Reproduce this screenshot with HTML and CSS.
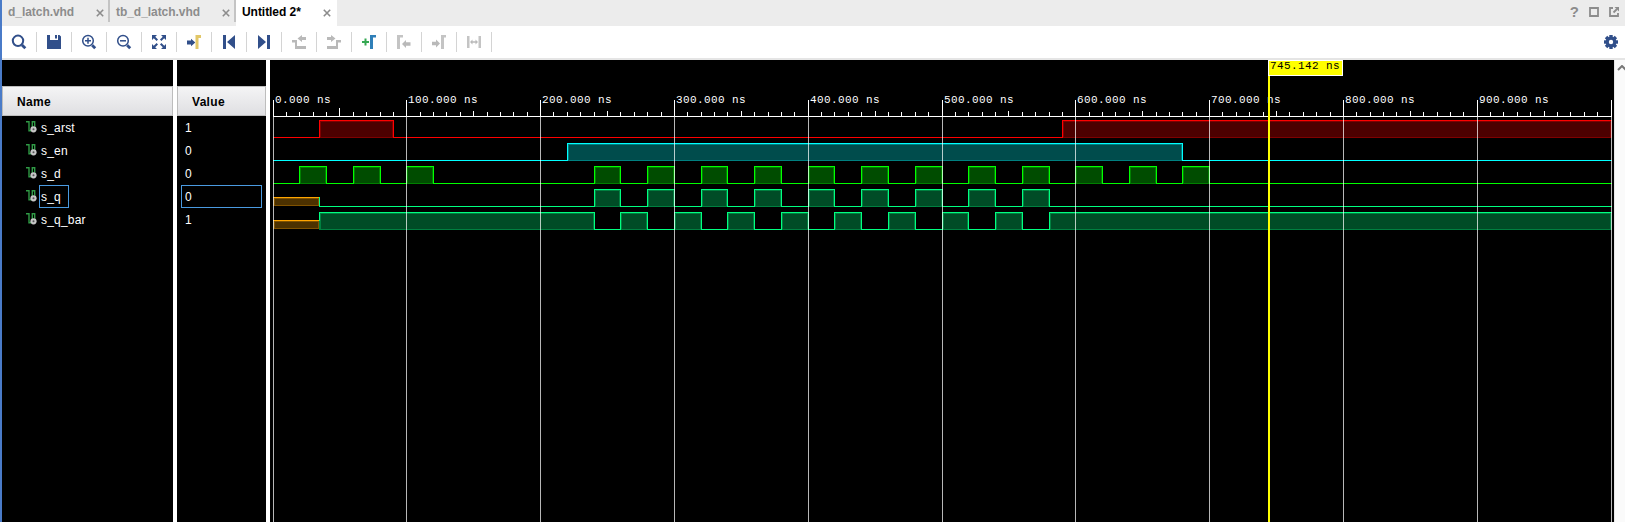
FILE: index.html
```html
<!DOCTYPE html>
<html lang="en">
<head>
<meta charset="utf-8">
<title>Waveform viewer</title>
<link rel="stylesheet" href="styles.css">
</head>
<body>
<div class="app">
  <div class="tabs">
    <div class="tab tab-first"><span>d_latch.vhd</span><svg class="close" viewBox="0 0 8 8"><path d="M.8.8l6.4 6.4M7.2.8L.8 7.2"/></svg></div>
    <div class="tab tab-second"><span>tb_d_latch.vhd</span><svg class="close" viewBox="0 0 8 8"><path d="M.8.8l6.4 6.4M7.2.8L.8 7.2"/></svg></div>
    <div class="tab tab-active"><span>Untitled 2*</span><svg class="close" viewBox="0 0 8 8"><path d="M.8.8l6.4 6.4M7.2.8L.8 7.2"/></svg></div>
    <div class="window-actions">
      <span class="help">?</span>
      <svg class="win" viewBox="0 0 10 10"><path d="M1 1h8v8H1z"/></svg>
      <svg class="win" viewBox="0 0 10 10"><path d="M4 1H1v8h8V6M4.500 5.500L8 2"/><path class="solid" d="M5.500 0H10v4.500z"/></svg>
    </div>
  </div>
  <div class="toolbar">
    <div class="tool"><svg viewBox="0 0 16 16"><circle class="line" cx="7" cy="6.800" r="5.200"/><path class="handle" d="M11 11l3.300 3.300"/></svg></div>
    <div class="tool"><svg viewBox="0 0 16 16"><path d="M1 1h3v5h8V1h1.500L15 2.500V15H1zM9 1h2v3.500H9z"/></svg></div>
    <div class="tool"><svg viewBox="0 0 16 16"><circle class="thin" cx="7" cy="6.800" r="5.300"/><path class="thin" d="M4 6.800h6M7 3.800v6"/><path class="handle" d="M11.200 11.200l3 3"/></svg></div>
    <div class="tool"><svg viewBox="0 0 16 16"><circle class="thin" cx="7" cy="6.800" r="5.300"/><path class="thin" d="M4 6.800h6"/><path class="handle" d="M11.200 11.200l3 3"/></svg></div>
    <div class="tool"><svg viewBox="0 0 16 16"><path d="M1 1h5L1 6zM15 1v5l-5-5zM1 15v-5l5 5zM15 15h-5l5-5z"/><path class="line" d="M3 3l3.300 3.300M13 3L9.700 6.300M3 13l3.300-3.300M13 13L9.700 9.700"/></svg></div>
    <div class="tool"><svg viewBox="0 0 16 16"><path d="M1 6.500h4V4.800L9.300 8.500 5 12.200V10.500H1z"/><path class="yellow" d="M9.500 15V1H15v3h-2.500v11z"/></svg></div>
    <div class="tool"><svg viewBox="0 0 16 16"><path d="M2 1h3v14H2zM14 1v14L6 8z"/></svg></div>
    <div class="tool"><svg viewBox="0 0 16 16"><path d="M11 1h3v14h-3zM2 1v14l8-7z"/></svg></div>
    <div class="tool off"><svg viewBox="0 0 16 16"><path d="M1 6h5v6h9v3H4V8.500H1zM6.500 4.500L11 1v2h4v3h-4v2z"/></svg></div>
    <div class="tool off"><svg viewBox="0 0 16 16"><path d="M15 6h-5v6H1v3h11V8.500h3zM9.500 4.500L5 1v2H1v3h4v2z"/></svg></div>
    <div class="tool"><svg viewBox="0 0 16 16"><path class="green" d="M1 7h2.500V4.500h2V7H8v2H5.500v2.500h-2V9H1z"/><path class="blue" d="M9 15V1h6v2.500h-3V15z"/></svg></div>
    <div class="tool off"><svg viewBox="0 0 16 16"><path class="pale" d="M1 15V1h6v2.500H4V15z"/><path d="M6 10l4-4v2.300h4.500v3.500H10V14z"/></svg></div>
    <div class="tool off"><svg viewBox="0 0 16 16"><path class="pale" d="M10 15V1h5v2.500h-2V15z"/><path d="M9 9.500l-4-4v2.300H1v3.500h4v2.200z"/></svg></div>
    <div class="tool off"><svg viewBox="0 0 16 16"><path class="pale" d="M1 2h2.500v12H1zM12.500 2H15v12h-2.500z"/><path d="M4 8l2.500-2.500v1.800h3V5.500L12 8l-2.500 2.500V8.700h-3v1.800z"/></svg></div>
    <svg class="gear" viewBox="-8 -8 16 16"><g><rect x="-1.700" y="-7" width="3.400" height="14"/><rect x="-1.700" y="-7" width="3.400" height="14" transform="rotate(45)"/><rect x="-1.700" y="-7" width="3.400" height="14" transform="rotate(90)"/><rect x="-1.700" y="-7" width="3.400" height="14" transform="rotate(135)"/><circle r="5.400"/></g><circle class="hole" r="2.200"/></svg>
  </div>
  <div class="viewer">
    <div class="column names">
      <div class="head">Name</div>
      <div class="row"><svg class="signal" viewBox="0 0 11 12"><path d="M0 .7h3v9h2M6.300 6V.7h2.400v5"/><circle cx="7.500" cy="8.300" r="3.100"/><circle class="dot" cx="7.500" cy="8.300" r="1"/></svg><span class="label">s_arst</span></div>
      <div class="row"><svg class="signal" viewBox="0 0 11 12"><path d="M0 .7h3v9h2M6.300 6V.7h2.400v5"/><circle cx="7.500" cy="8.300" r="3.100"/><circle class="dot" cx="7.500" cy="8.300" r="1"/></svg><span class="label">s_en</span></div>
      <div class="row"><svg class="signal" viewBox="0 0 11 12"><path d="M0 .7h3v9h2M6.300 6V.7h2.400v5"/><circle cx="7.500" cy="8.300" r="3.100"/><circle class="dot" cx="7.500" cy="8.300" r="1"/></svg><span class="label">s_d</span></div>
      <div class="row"><svg class="signal" viewBox="0 0 11 12"><path d="M0 .7h3v9h2M6.300 6V.7h2.400v5"/><circle cx="7.500" cy="8.300" r="3.100"/><circle class="dot" cx="7.500" cy="8.300" r="1"/></svg><span class="label selected">s_q</span></div>
      <div class="row"><svg class="signal" viewBox="0 0 11 12"><path d="M0 .7h3v9h2M6.300 6V.7h2.400v5"/><circle cx="7.500" cy="8.300" r="3.100"/><circle class="dot" cx="7.500" cy="8.300" r="1"/></svg><span class="label">s_q_bar</span></div>
    </div>
    <div class="column values">
      <div class="head">Value</div>
      <div class="row"><span class="value">1</span></div>
      <div class="row"><span class="value">0</span></div>
      <div class="row"><span class="value">0</span></div>
      <div class="row"><span class="value selected">0</span></div>
      <div class="row"><span class="value">1</span></div>
    </div>
    <svg class="wave" id="wave" width="1344" height="462" viewBox="270 60 1344 462"></svg>
    <div class="scrollbar"><svg viewBox="0 0 10 6"><path d="M1 5l4-4 4 4"/></svg></div>
  </div>
</div>
<script src="wave.js"></script>
</body>
</html>
```
FILE: styles.css
```css
* { box-sizing: border-box; }
body {
  margin: 0;
  background: #fff;
  font: 12px "Liberation Sans", Arial, sans-serif;
  color: #000;
}
.app {
  height: 522px;
  display: flex;
  flex-direction: column;
  border-left: 2px solid #4a7bc8;
  overflow: hidden;
}
svg { display: block; flex: none; }

.tabs { height: 26px; display: flex; background: #ececec; font-weight: bold; }
.tab {
  height: 26px;
  display: flex;
  justify-content: space-between;
  padding: 0 6px 3px 6px;
  align-items: center;
  color: #8c8c8c;
  position: relative;
}
.tab span { letter-spacing: -0.05px; }
.tab-first { width: 108px; }
.tab-second { width: 126px; }
.tab-first::after, .tab-second::after {
  content: "";
  position: absolute;
  right: 0;
  top: 0;
  width: 2px;
  height: 22px;
  background: #c4c4c4;
}
.tab-active { width: 101px; background: #fff; color: #000; }
.close { width: 8px; height: 8px; margin-top: 3px; fill: none; stroke: #8c8c8c; stroke-width: 1.6; }
.window-actions { margin-left: auto; display: flex; align-items: center; padding: 0 6px 2px 0; gap: 10px; }
.help { color: #8c8c8c; font-size: 15px; line-height: 20px; }
.win { width: 10px; height: 10px; fill: none; stroke: #8c8c8c; stroke-width: 1.8; }
.win .solid { fill: #8c8c8c; stroke: none; }

.toolbar { height: 34px; display: flex; align-items: flex-start; padding-top: 6px; border-bottom: 2px solid #e5e5e5; }
.tool { width: 35px; height: 20px; border-right: 1px solid #d4d4d4; display: flex; align-items: center; justify-content: center; fill: #314f8a; stroke: none; }
.tool svg { width: 16px; height: 16px; }
.tool .line, .tool .thin, .tool .handle { fill: none; stroke: #314f8a; stroke-width: 2; }
.tool .thin { stroke-width: 1.5; }
.tool .handle { stroke-width: 2.8; }
.tool .yellow { fill: #e2c768; }
.tool .green { fill: #35a852; }
.tool .blue { fill: #2f7fb8; }
.off { fill: #b9b9b9; }
.off .pale { fill: #c4c4c4; }
.gear { width: 16px; height: 16px; margin: 2px 6px 0 auto; fill: #314f8a; }
.gear .hole { fill: #fff; }

.viewer { display: flex; height: 462px; }
.column { background: #000; padding-top: 26px; margin-right: 4px; color: #fff; }
.names { width: 171px; }
.values { width: 89px; }
.head {
  height: 30px;
  padding: 1px 0 0 14px;
  display: flex;
  align-items: center;
  border: 1px solid #bdbdbd;
  background: linear-gradient(#f4f4f5, #dfdfe2);
  color: #000;
  font-weight: bold;
  letter-spacing: 0.3px;
}
.row { height: 23px; display: flex; align-items: center; letter-spacing: 0.2px; }
.names .row { padding-left: 23.500px; }
.signal { width: 11px; height: 12px; margin: 0 2.500px 1px 0; fill: none; stroke: #2f9a45; stroke-width: 1.4; }
.signal circle { fill: #c6c6c6; stroke: none; }
.signal .dot { fill: #555; }
.label, .value { height: 23px; line-height: 23px; border: 1px solid transparent; padding: 0 1px; }
.label.selected { width: 30px; border-color: #4a9ae0; }
.values .row { padding: 0 4px; }
.value { width: 81px; padding-left: 3px; }
.value.selected { border-color: #4a9ae0; }

.wave { background: #000; shape-rendering: crispEdges; }
.wave text { font: 11px "Liberation Mono", "Courier New", monospace; letter-spacing: 0.4px; fill: #fff; }
.wave .cursor-text { fill: #000; }
.tick { fill: #fff; }
.grid { fill: #fff; fill-opacity: 0.72; }
.cursor { fill: #ff0; }
.cursor-box { fill: #ff0; stroke: #fff; }
.scrollbar { width: 11px; background: #fafafa; border-left: 1px solid #e8e8e8; padding: 5px 0 0 2px; }
.scrollbar svg { width: 10px; height: 6px; fill: none; stroke: #777; stroke-width: 2; }
```
FILE: wave.js
```js
const svg = document.getElementById('wave');
const NS = 'http://www.w3.org/2000/svg';
const xAt = t => Math.floor(273 + t * 1.338);

function add(tag, attrs, text) {
  const el = document.createElementNS(NS, tag);
  for (const k in attrs) el.setAttribute(k, attrs[k]);
  if (text) el.textContent = text;
  svg.appendChild(el);
}
function rect(x, y, width, height, attrs) {
  add('rect', Object.assign({ x, y, width, height }, attrs));
}

// Each signal lists the intervals (ns) during which it is high.
const pulses = (from, to) => {
  const list = [];
  for (let t = from; t <= to; t += 40) list.push([t, t + 20]);
  return list;
};
const signals = [
  { line: '#ff0000', edge: '#800000', fill: '#4c0000', high: [[35, 90], [590, 1000]] },
  { line: '#00ffff', edge: '#008080', fill: '#004c4c', high: [[220, 680]] },
  { line: '#00ff00', edge: '#008000', fill: '#004c00', high: [...pulses(20, 100), ...pulses(240, 680)] },
  { line: '#00ff80', edge: '#008040', fill: '#004c26', high: pulses(240, 560), unknown: 35 },
  { line: '#00ff80', edge: '#008040', fill: '#004c26', high: [[35, 240], ...pulses(260, 540), [580, 1000]], unknown: 35 }
];

signals.forEach((s, i) => {
  const top = 120 + 23 * i, low = top + 17;
  let last = s.unknown || 0;
  if (s.unknown) {
    const w = xAt(35) - 273;
    rect(273, low - 9, w, 9, { fill: '#805200' });
    rect(275, low - 7, w - 3, 6, { fill: '#4c3100' });
    rect(273, low - 9, w, 1, { fill: '#ffa500' });
    if (i === 3) rect(xAt(35), low - 9, 1, 10, { fill: s.line });
  }
  s.high.forEach(([a, b]) => {
    const x = xAt(a), e = xAt(b);
    rect(xAt(last), low, x - xAt(last) + 1, 1, { fill: s.line });
    rect(x, top, e - x + 1, 18, { fill: s.edge });
    rect(x + 2, top + 2, e - x - 3, 15, { fill: s.fill });
    rect(x, top, e - x + 1, 1, { fill: s.line });
    rect(x, top, 1, a === s.unknown ? 9 : 18, { fill: s.line });
    if (b < 1000) rect(e, top, 1, 18, { fill: s.line });
    last = b;
  });
  if (last < 1000) rect(xAt(last), low, 1611 - xAt(last) + 1, 1, { fill: s.line });
});

// Time axis and grid.
rect(273, 116, 1339, 1, { class: 'tick' });
for (let t = 0; t <= 1000; t += 10) {
  const x = xAt(t);
  if (t % 100 === 0) {
    rect(x, 100, 1, 16, { class: 'tick' });
    rect(x, 117, 1, 405, { class: 'grid' });
    if (t < 1000) add('text', { x: x + 2, y: 103 }, t + '.000 ns');
  } else {
    const h = t === 50 ? 8 : t % 50 === 0 ? 5 : 4;
    rect(x, 116 - h, 1, h, { class: 'tick' });
  }
}

// Cursor at 745.142 ns.
rect(1268, 60, 2, 462, { class: 'cursor' });
rect(1268.5, 60.5, 74, 15, { class: 'cursor-box' });
add('text', { x: 1270, y: 69, class: 'cursor-text' }, '745.142 ns');
```
